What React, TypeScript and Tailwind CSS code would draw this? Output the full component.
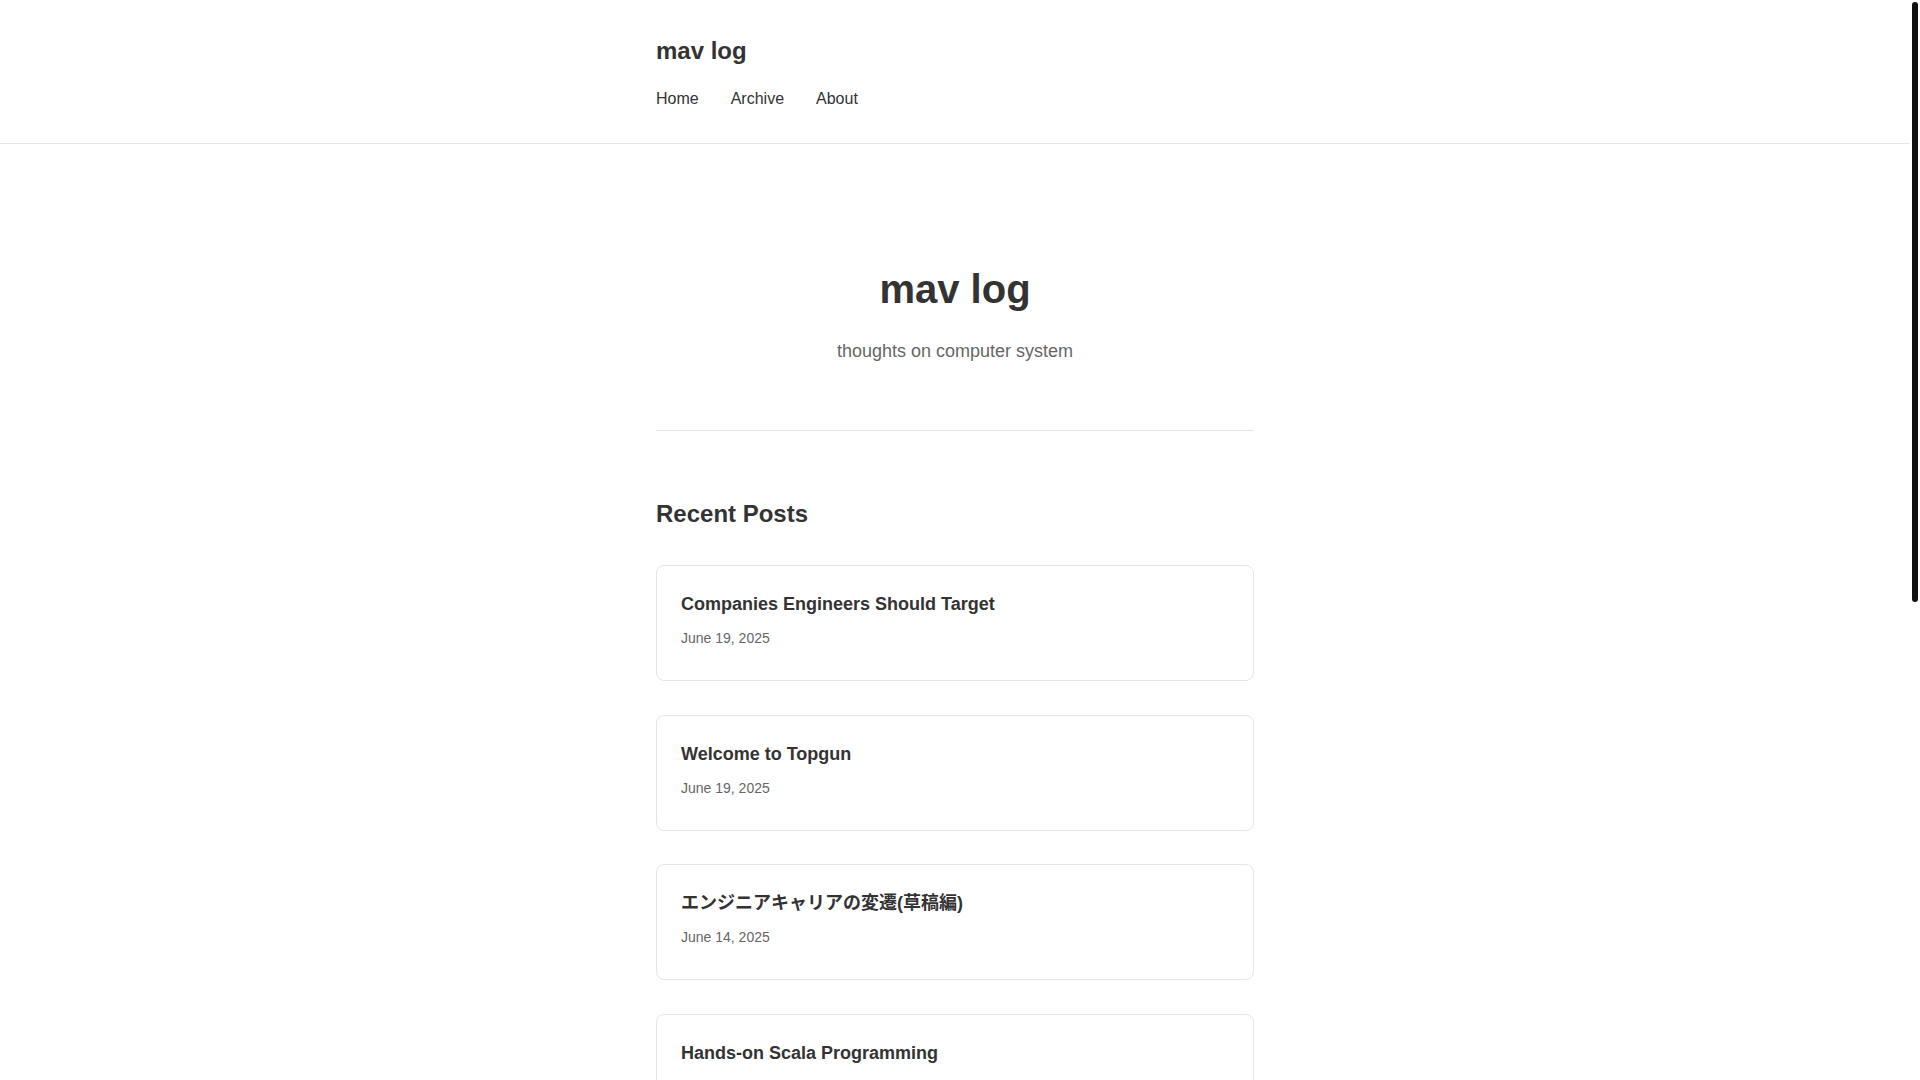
import React from 'react';

interface Post {
  title: string;
  date: string;
}

const posts: Post[] = [
  { title: 'Companies Engineers Should Target', date: 'June 19, 2025' },
  { title: 'Welcome to Topgun', date: 'June 19, 2025' },
  { title: 'エンジニアキャリアの変遷(草稿編)', date: 'June 14, 2025' },
  { title: 'Hands-on Scala Programming', date: 'June 1, 2025' },
  { title: 'Notes on Distributed Consensus', date: 'May 24, 2025' },
  { title: 'Reading the Linux Scheduler', date: 'May 11, 2025' },
  { title: 'Memory Models in Practice', date: 'April 29, 2025' },
  { title: 'Why I Started This Blog', date: 'April 20, 2025' },
];

const navItems = ['Home', 'Archive', 'About'];

const PostCard: React.FC<{ post: Post }> = ({ post }) => (
  <a
    href="#"
    className="block rounded-lg border border-[#e6e6e6] bg-white px-6 pt-[25px] pb-[31px]"
  >
    <h3 className="text-[18px] leading-[27px] font-bold text-[#333]">{post.title}</h3>
    <p className="mt-[10px] text-[14px] leading-[21px] text-[#666]">{post.date}</p>
  </a>
);

export default function App() {
  return (
    <div className="flex h-screen overflow-hidden bg-white text-[#333] font-['Liberation_Sans','Noto_Sans_CJK_JP',sans-serif]">
      <div className="min-w-0 flex-1 overflow-hidden">
        <header className="border-b border-[#e6e6e6]">
          <div className="mx-auto w-[598px] pt-[33px] pb-[32px]">
            <a href="#" className="block text-[24px] leading-[36px] font-bold text-[#333]">
              mav log
            </a>
            <nav className="mt-[18px] flex gap-8 text-[16px] leading-[24px] text-[#333]">
              {navItems.map((item) => (
                <a key={item} href="#">
                  {item}
                </a>
              ))}
            </nav>
          </div>
        </header>

        <main className="mx-auto w-[598px]">
          <section className="border-b border-[#e6e6e6] pt-[121px] pb-[65px] text-center">
            <h1 className="text-[40px] leading-[48px] font-bold text-[#333]">mav log</h1>
            <p className="mt-[25px] text-[18px] leading-[27px] text-[#666]">
              thoughts on computer system
            </p>
          </section>

          <section className="pt-[65px] pb-16">
            <h2 className="mb-[33px] text-[24px] leading-[36px] font-bold text-[#333]">Recent Posts</h2>
            <div className="flex flex-col gap-[33.5px]">
              {posts.map((post) => (
                <PostCard key={post.title} post={post} />
              ))}
            </div>
          </section>
        </main>

        <footer className="border-t border-[#e6e6e6]">
          <div className="mx-auto w-[598px] py-14 text-center text-[14px] leading-[21px] text-[#666]">
            © 2025 mav log
          </div>
        </footer>
      </div>

      {/* scrollbar */}
      <div className="w-[10px] shrink-0 p-[2px]">
        <div className="h-[600px] w-[6px] rounded-full bg-[#111]" />
      </div>
    </div>
  );
}
